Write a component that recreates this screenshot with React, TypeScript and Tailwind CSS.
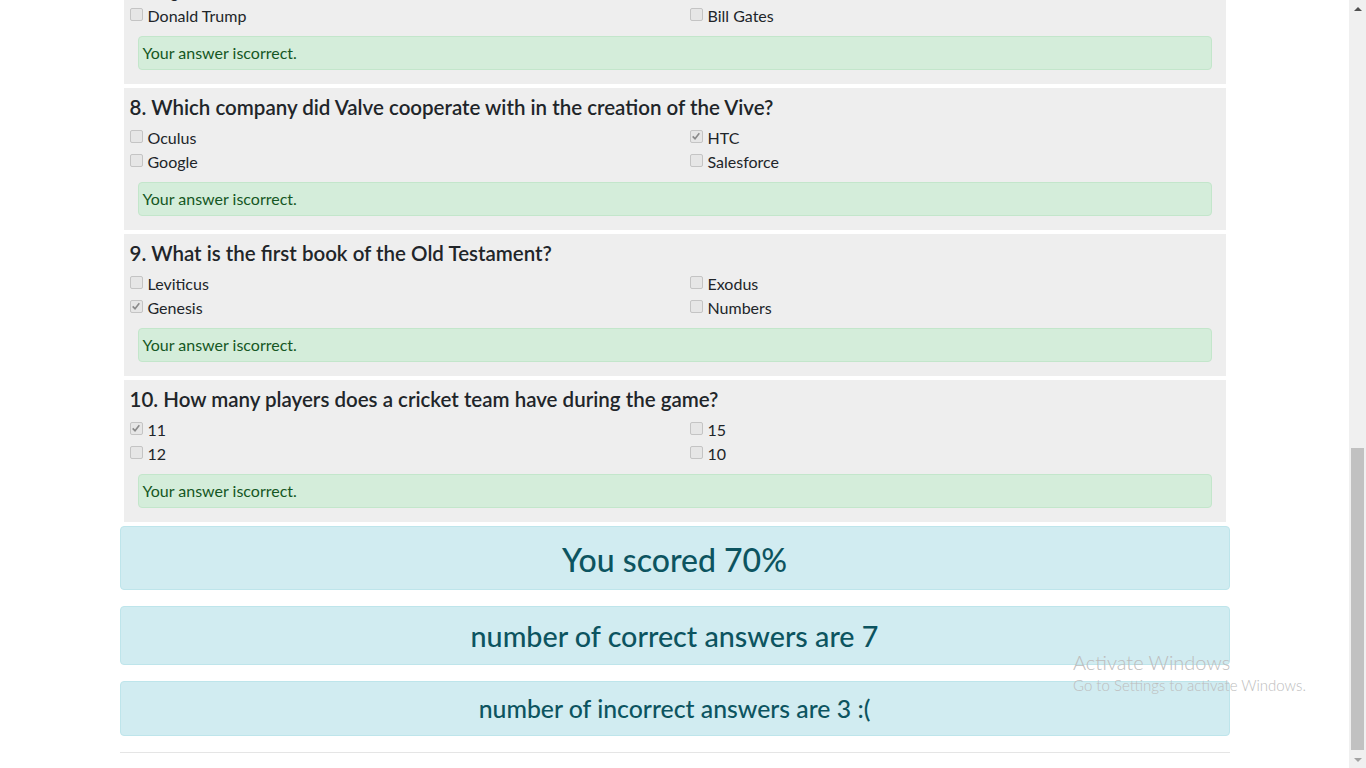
import React from "react";

type Question = {
  title: string;
  options: { label: string; checked?: boolean }[];
};

const questions: Question[] = [
  {
    title: "7. Who is the founder of Microsoft?",
    options: [
      { label: "Sergei Brin" },
      { label: "Steve Jobs" },
      { label: "Donald Trump" },
      { label: "Bill Gates" },
    ],
  },
  {
    title: "8. Which company did Valve cooperate with in the creation of the Vive?",
    options: [
      { label: "Oculus" },
      { label: "HTC", checked: true },
      { label: "Google" },
      { label: "Salesforce" },
    ],
  },
  {
    title: "9. What is the first book of the Old Testament?",
    options: [
      { label: "Leviticus" },
      { label: "Exodus" },
      { label: "Genesis", checked: true },
      { label: "Numbers" },
    ],
  },
  {
    title: "10. How many players does a cricket team have during the game?",
    options: [
      { label: "11", checked: true },
      { label: "15" },
      { label: "12" },
      { label: "10" },
    ],
  },
];

function Box({ checked }: { checked?: boolean }) {
  return (
    <span className="mr-[5px] flex h-[13px] w-[13px] shrink-0 -translate-y-[2px] items-center justify-center rounded-[2px] border border-[#c4c4c4] bg-[#e6e6e6]">
      {checked && (
        <svg viewBox="0 0 12 12" className="h-[10px] w-[10px]">
          <path d="M2 6.5 L4.8 9.2 L10 2.8" fill="none" stroke="#8a8a8a" strokeWidth="2" />
        </svg>
      )}
    </span>
  );
}

function QuestionCard({ q }: { q: Question }) {
  return (
    <div className="mx-[4px] mb-[4px] bg-[#eeeeee] px-[6px] pt-[7px] pb-[14px]">
      <h5 className="mb-[7px] text-[20.5px] leading-[24px] font-semibold text-[#212529]">{q.title}</h5>
      <div className="grid grid-cols-[560px_1fr] text-[16px] leading-[24px] text-[#212529]">
        {q.options.map((o) => (
          <label key={o.label} className="flex items-center">
            <Box checked={o.checked} />
            {o.label}
          </label>
        ))}
      </div>
      <div className="mx-[8px] mt-[8px] rounded-[4px] border border-[#c3e6cb] bg-[#d4edda] px-[4px] py-[4px] text-[16px] leading-[24px] text-[#155724]">
        Your answer iscorrect.
      </div>
    </div>
  );
}

function Scrollbar() {
  return (
    <div className="flex h-[768px] w-[17px] shrink-0 flex-col bg-[#f0f0f0]">
      <div className="flex h-[17px] items-center justify-center">
        <svg viewBox="0 0 8 4" className="h-[4px] w-[8px]">
          <path d="M0 4 L4 0 L8 4 Z" fill="#505050" />
        </svg>
      </div>
      <div className="flex flex-1 flex-col px-[2px] pt-[431px]">
        <div className="h-[302px] bg-[#c1c1c1]" />
      </div>
      <div className="flex h-[17px] items-center justify-center">
        <svg viewBox="0 0 8 4" className="h-[4px] w-[8px]">
          <path d="M0 0 L8 0 L4 4 Z" fill="#a3a3a3" />
        </svg>
      </div>
    </div>
  );
}

export default function App() {
  return (
    <div
      className="relative flex h-[768px] w-full overflow-hidden bg-white"
      style={{ fontFamily: "Lato, 'Open Sans', sans-serif" }}
    >
      <div className="flex-1 overflow-hidden">
        <div className="mx-auto -mt-[58px] w-[1110px]">
          {questions.map((q) => (
            <QuestionCard key={q.title} q={q} />
          ))}
          <div className="mb-[16px] rounded-[4px] border border-[#bee5eb] bg-[#d1ecf1] pt-[14px] pb-[10px] text-center text-[32px] leading-[38px] font-medium text-[#0c5460]">
            You scored 70%
          </div>
          <div className="mb-[16px] rounded-[4px] border border-[#bee5eb] bg-[#d1ecf1] pt-[13px] pb-[11px] text-center text-[28.7px] leading-[33px] font-medium text-[#0c5460]">
            number of correct answers are 7
          </div>
          <div className="mb-[16px] rounded-[4px] border border-[#bee5eb] bg-[#d1ecf1] pt-[13px] pb-[12px] text-center text-[24.8px] leading-[28px] font-medium text-[#0c5460]">
            number of incorrect answers are 3 :(
          </div>
          <hr className="border-t border-[#e5e5e5]" />
        </div>
      </div>
      <Scrollbar />

      <div className="pointer-events-none absolute top-[650px] left-[1073px] text-[#bdbdbd]">
        <div className="text-[20px] leading-[24px] font-light">Activate Windows</div>
        <div className="text-[15px] leading-[22px] font-light">Go to Settings to activate Windows.</div>
      </div>
    </div>
  );
}
